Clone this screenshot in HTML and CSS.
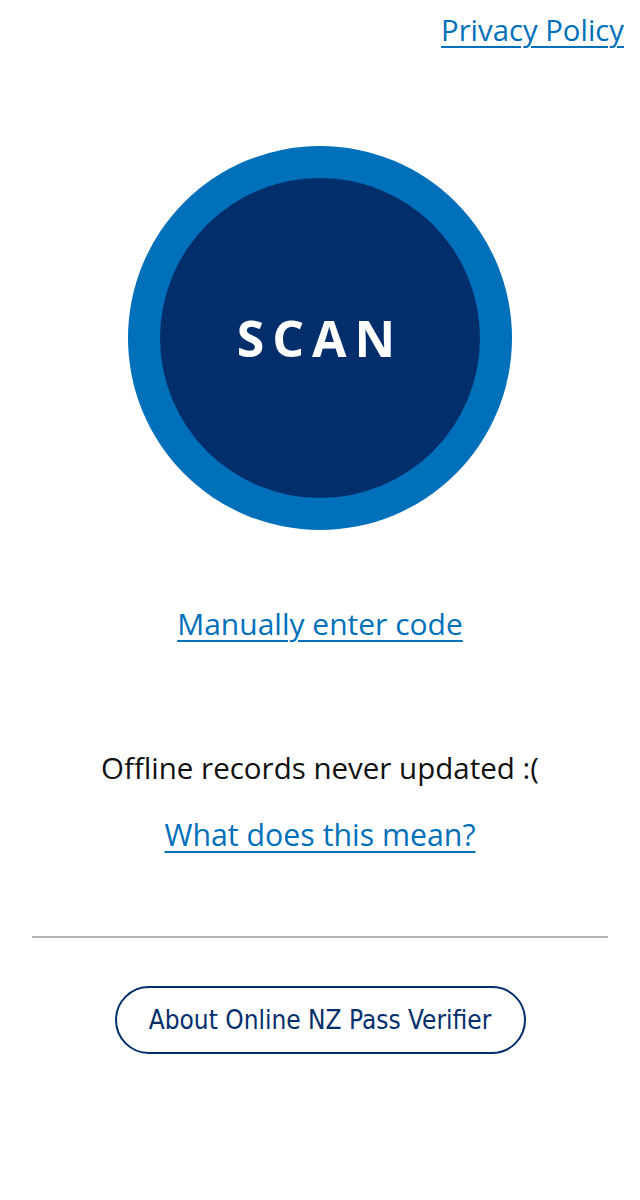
FILE: index.html
```html
<!DOCTYPE html>
<html lang="en">
<head>
<meta charset="utf-8">
<title>NZ Pass Verifier</title>
<link rel="stylesheet" href="styles.css">
</head>
<body>
<div class="page">
  <header class="top">
    <a class="link privacy" href="#">Privacy Policy</a>
  </header>
  <div class="scan-wrap">
    <button class="scan-outer"><span class="scan-inner">SCAN</span></button>
  </div>
  <a class="link manual" href="#">Manually enter code</a>
  <p class="status">Offline records never updated :(</p>
  <a class="link what" href="#">What does this mean?</a>
  <hr class="divider">
  <div class="about-wrap">
    <button class="about">About Online NZ Pass Verifier</button>
  </div>
</div>
</body>
</html>
```

FILE: styles.css
```css
html, body {
  margin: 0;
  padding: 0;
  background: #ffffff;
}
.page {
  width: 640px;
  display: flex;
  flex-direction: column;
  align-items: center;
  font-family: "Open Sans", "Liberation Sans", sans-serif;
}
.top {
  align-self: stretch;
  display: flex;
  justify-content: flex-end;
  padding: 10px 16px 0 0;
  height: 50px;
  box-sizing: border-box;
}
.link {
  color: #0070bb;
  text-decoration: underline;
  text-decoration-thickness: 2px;
  text-underline-offset: 5px;
  font-size: 29.5px;
  line-height: 40px;
}
.privacy {
  font-size: 29.3px;
}
.scan-wrap {
  margin-top: 96px;
}
.scan-outer {
  width: 384px;
  height: 384px;
  border-radius: 50%;
  border: none;
  padding: 0;
  background: #0070bb;
  display: flex;
  align-items: center;
  justify-content: center;
  cursor: pointer;
}
.scan-inner {
  width: 320px;
  height: 320px;
  border-radius: 50%;
  background: #022f6c;
  color: #ffffff;
  display: flex;
  align-items: center;
  justify-content: center;
  font-family: "Open Sans", "Liberation Sans", sans-serif;
  font-weight: 700;
  font-size: 50px;
  letter-spacing: 8px;
  box-sizing: border-box;
}
.manual {
  margin-top: 74px;
  font-size: 30px;
}
.status {
  margin: 104px 0 0 0;
  font-size: 29.5px;
  line-height: 40px;
  color: #111111;
}
.what {
  margin-top: 27px;
  font-size: 30.3px;
}
.divider {
  width: 576px;
  margin: 81px 0 0 0;
  border: none;
  border-top: 2px solid #b3b3b3;
  height: 0;
}
.about-wrap {
  margin-top: 48px;
}
.about {
  width: 411px;
  height: 68px;
  border: 2px solid #022f6c;
  border-radius: 34px;
  background: #ffffff;
  color: #022f6c;
  font-family: "DejaVu Sans Condensed", "DejaVu Sans", sans-serif;
  font-size: 26px;
  padding: 0;
  cursor: pointer;
}
```
